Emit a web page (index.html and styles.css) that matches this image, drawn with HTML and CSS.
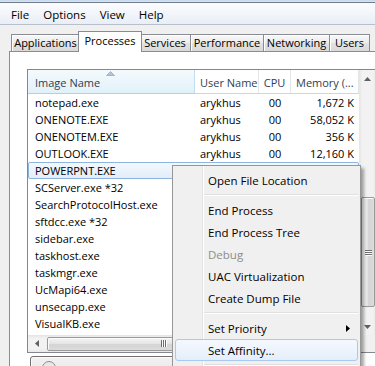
FILE: index.html
```html
<!DOCTYPE html>
<html>
<head>
<meta charset="utf-8">
<title>Windows Task Manager</title>
<link rel="stylesheet" href="styles.css">
</head>
<body>
<div class="window">
  <div class="titlestrip"></div>
  <div class="menubar">
    <span class="menubar-item">File</span>
    <span class="menubar-item">Options</span>
    <span class="menubar-item">View</span>
    <span class="menubar-item">Help</span>
  </div>
  <div class="tabs">
    <div class="tab tab-apps">Applications</div>
    <div class="tab tab-active tab-proc">Processes</div>
    <div class="tab tab-serv">Services</div>
    <div class="tab tab-perf">Performance</div>
    <div class="tab tab-net">Networking</div>
    <div class="tab tab-users">Users</div>
  </div>
  <div class="panel">
    <div class="list">
      <div class="list-main">
        <div class="lv-header">
          <div class="hcell hcell-sorted">
            <svg class="sort-arrow" width="9" height="5" viewBox="0 0 9 5"><polygon points="0.5,4.5 4.5,0.5 8.5,4.5" fill="#b3c4d8" stroke="#97a9bf" stroke-width="0.8"/></svg>
            Image Name
          </div>
          <div class="hcell">User Name</div>
          <div class="hcell hcell-center">CPU</div>
          <div class="hcell">Memory (...</div>
        </div>
        <div class="lv-rows">
          <div class="lv-row"><span class="c-name">notepad.exe</span><span class="c-user">arykhus</span><span class="c-cpu">00</span><span class="c-mem">1,672 K</span></div>
          <div class="lv-row"><span class="c-name">ONENOTE.EXE</span><span class="c-user">arykhus</span><span class="c-cpu">00</span><span class="c-mem">58,052 K</span></div>
          <div class="lv-row"><span class="c-name">ONENOTEM.EXE</span><span class="c-user">arykhus</span><span class="c-cpu">00</span><span class="c-mem">356 K</span></div>
          <div class="lv-row"><span class="c-name">OUTLOOK.EXE</span><span class="c-user">arykhus</span><span class="c-cpu">00</span><span class="c-mem">12,160 K</span></div>
          <div class="lv-row lv-row-selected"><span class="c-name">POWERPNT.EXE</span></div>
          <div class="lv-row"><span class="c-name">SCServer.exe *32</span></div>
          <div class="lv-row"><span class="c-name">SearchProtocolHost.exe</span></div>
          <div class="lv-row"><span class="c-name">sftdcc.exe *32</span></div>
          <div class="lv-row"><span class="c-name">sidebar.exe</span></div>
          <div class="lv-row"><span class="c-name">taskhost.exe</span></div>
          <div class="lv-row"><span class="c-name">taskmgr.exe</span></div>
          <div class="lv-row"><span class="c-name">UcMapi64.exe</span></div>
          <div class="lv-row"><span class="c-name">unsecapp.exe</span></div>
          <div class="lv-row"><span class="c-name">VisualKB.exe</span></div>
        </div>
      </div>
      <div class="vscroll">
        <div class="sb-btn"><svg width="7" height="4" viewBox="0 0 7 4"><polygon points="0,4 3.5,0 7,4" fill="#606060"/></svg></div>
        <div class="sb-track">
          <div class="vthumb"><span class="grip-h"></span><span class="grip-h"></span><span class="grip-h"></span></div>
        </div>
        <div class="sb-btn"><svg width="7" height="4" viewBox="0 0 7 4"><polygon points="0,0 3.5,4 7,0" fill="#606060"/></svg></div>
      </div>
      <div class="hscroll">
        <div class="sb-btn"><svg width="4" height="7" viewBox="0 0 4 7"><polygon points="4,0 0,3.5 4,7" fill="#606060"/></svg></div>
        <div class="hthumb"><span class="grip-v"></span><span class="grip-v"></span><span class="grip-v"></span></div>
      </div>
      <div class="sb-corner"></div>
    </div>
    <div class="allusers-btn">
      <span class="shield"></span>
    </div>
  </div>

  <div class="ctxmenu">
    <div class="mi">Open File Location</div>
    <div class="msep"></div>
    <div class="mi">End Process</div>
    <div class="mi">End Process Tree</div>
    <div class="mi mi-disabled">Debug</div>
    <div class="mi">UAC Virtualization</div>
    <div class="mi">Create Dump File</div>
    <div class="msep"></div>
    <div class="mi mi-sub">Set Priority<svg class="sub-arrow" width="4" height="7" viewBox="0 0 4 7"><polygon points="0,0 4,3.5 0,7" fill="#000"/></svg></div>
    <div class="mi mi-hot">Set Affinity...</div>
    <div class="msep"></div>
  </div>
</div>
</body>
</html>
```
FILE: styles.css
```css
* { box-sizing: border-box; }
html, body {
  margin: 0;
  padding: 0;
}
body {
  width: 375px;
  height: 366px;
  overflow: hidden;
  background: #f0f0f0;
  font-family: "Open Sans", "Noto Sans", sans-serif;
  font-size: 11px;
  color: #000;
}
.window {
  position: relative;
  width: 375px;
  height: 366px;
  overflow: hidden;
}
.titlestrip {
  height: 3px;
  background: linear-gradient(#c6d6ea, #dbe6f3);
  border-bottom: 1px solid #6f7d8f;
}
.menubar {
  height: 22px;
  display: flex;
  align-items: center;
  padding: 2px 0 0 4px;
  background: linear-gradient(#fbfcfe, #e9eef6);
  border-bottom: 1px solid #b7c0cc;
  font-size: 11.5px;
}
.menubar-item {
  padding: 0 7px;
  line-height: 18px;
}
.tabs {
  height: 26px;
  display: flex;
  align-items: flex-end;
  padding-left: 11px;
}
.tab {
  height: 17px;
  border: 1px solid #898c95;
  border-bottom: none;
  background: linear-gradient(#f8f8f8, #ececec 50%, #e2e2e2 50%, #d9d9d9);
  box-shadow: inset 1px 1px 0 #fff;
  text-align: center;
  line-height: 16px;
  margin-left: -1px;
  white-space: nowrap;
}
.tab-apps { width: 69px; margin-left: 0; }
.tab-proc { width: 64px; }
.tab-serv { width: 52px; }
.tab-perf { width: 74px; }
.tab-net { width: 67px; }
.tab-users { width: 41px; }
.tab-active {
  position: relative;
  z-index: 2;
  height: 21px;
  margin-left: -2px;
  margin-right: -2px;
  margin-bottom: -1px;
  background: #fff;
  box-shadow: none;
  line-height: 18px;
}
.panel {
  width: 420px;
  height: 320px;
  margin-left: 9px;
  border-top: 1px solid #898c95;
  border-left: 1px solid #898c95;
  background: #fff;
  padding: 17px 0 0 17px;
}
.list {
  width: 350px;
  height: 284px;
  border: 1px solid #828790;
  display: grid;
  grid-template-columns: 331px 17px;
  grid-template-rows: 265px 17px;
  background: #fff;
}
.list-main {
  overflow: hidden;
}
.lv-header,
.lv-row {
  display: grid;
  grid-template-columns: 167px 64px 32px 68px;
}
.lv-header {
  height: 24px;
  border-bottom: 1px solid #d5d5d5;
  color: #2f3e52;
}
.hcell {
  position: relative;
  border-right: 1px solid #e5e5e5;
  padding: 5px 0 0 5px;
  line-height: 16px;
  white-space: nowrap;
}
.hcell-sorted {
  padding-left: 7px;
  background: linear-gradient(#f4fafd, #e1f1f9);
  border-right-color: #c3def0;
  box-shadow: 0 1px 0 #a9d3ec;
}
.hcell-center { text-align: center; padding-left: 0; }
.sort-arrow {
  position: absolute;
  left: 78px;
  top: 1px;
}
.lv-row {
  height: 17px;
  line-height: 18px;
  white-space: nowrap;
}
.c-name { padding-left: 7px; }
.c-user { padding-left: 5px; }
.c-cpu { text-align: center; }
.c-mem { text-align: right; padding-right: 5px; }
.lv-row-selected {
  border: 1px solid #8fb3df;
  border-radius: 2px;
  background: linear-gradient(#f3f8fd, #e2edfa);
  line-height: 16px;
}
.lv-row-selected .c-name { padding-left: 6px; }
.vscroll {
  display: flex;
  flex-direction: column;
  background: linear-gradient(to right, #e4e4e4, #f2f2f2 20%, #f2f2f2 80%, #e9e9e9);
}
.sb-btn {
  flex: none;
  width: 17px;
  height: 17px;
  display: flex;
  align-items: center;
  justify-content: center;
}
.sb-track {
  flex: 1;
  padding: 110px 1px 0 2px;
}
.vthumb {
  height: 110px;
  border: 1px solid #9a9a9a;
  border-radius: 2px;
  background: linear-gradient(to right, #f4f4f4, #e6e6e6 45%, #d4d4d4 55%, #dcdcdc);
  box-shadow: inset 1px 1px 0 #fbfbfb;
  display: flex;
  flex-direction: column;
  align-items: center;
  justify-content: center;
  gap: 1px;
}
.grip-h {
  width: 7px;
  height: 1px;
  background: #6e6e6e;
  box-shadow: 0 1px 0 #fafafa;
}
.hscroll {
  display: flex;
  align-items: center;
  background: linear-gradient(#e4e4e4, #f2f2f2 20%, #f2f2f2 80%, #e9e9e9);
}
.hthumb {
  width: 233px;
  height: 14px;
  margin-left: 2px;
  border: 1px solid #9a9a9a;
  border-radius: 2px;
  background: linear-gradient(#f4f4f4, #e6e6e6 45%, #d4d4d4 55%, #dcdcdc);
  box-shadow: inset 1px 1px 0 #fbfbfb;
  display: flex;
  align-items: center;
  justify-content: center;
  gap: 1px;
}
.grip-v {
  width: 1px;
  height: 7px;
  background: #6e6e6e;
  box-shadow: 1px 0 0 #fafafa;
}
.sb-corner {
  background: #f0f0f0;
}
.allusers-btn {
  margin: 3px 0 0 3px;
  width: 190px;
  height: 24px;
  border: 1px solid #707070;
  border-radius: 3px;
  background: linear-gradient(#f2f2f2, #ebebeb 50%, #dddddd 50%, #cfcfcf);
  box-shadow: inset 0 0 0 1px #fcfcfc;
  display: flex;
  align-items: flex-start;
  padding: 4px 0 0 11px;
}
.shield {
  width: 14px;
  height: 14px;
  border-radius: 50%;
  border: 1px solid #8c8c8c;
  background: #e8e8e8;
}
.ctxmenu {
  position: absolute;
  left: 172px;
  top: 165px;
  width: 189px;
  border: 1px solid #979797;
  padding: 3px 2px;
  background:
    linear-gradient(to right, transparent 29px, #e2e3e3 29px, #e2e3e3 30px, #fff 30px, #fff 31px, transparent 31px),
    #f0f0f0;
  box-shadow: 3px 3px 3px rgba(0, 0, 0, 0.35);
  font-size: 11.5px;
}
.mi {
  height: 22px;
  line-height: 21px;
  padding-left: 32px;
  border: 1px solid transparent;
  border-radius: 3px;
  white-space: nowrap;
}
.mi-disabled { color: #8d8d8d; }
.mi-sub {
  display: flex;
  align-items: center;
  justify-content: space-between;
  padding-right: 7px;
}
.mi-hot {
  border-color: #a9c9ef;
  background: linear-gradient(#f5f9fe, #e4eefb);
}
.msep {
  height: 8px;
  margin-left: 29px;
  padding-top: 3px;
}
.msep::before {
  content: "";
  display: block;
  border-top: 1px solid #e0e0e0;
  border-bottom: 1px solid #ffffff;
}
```
